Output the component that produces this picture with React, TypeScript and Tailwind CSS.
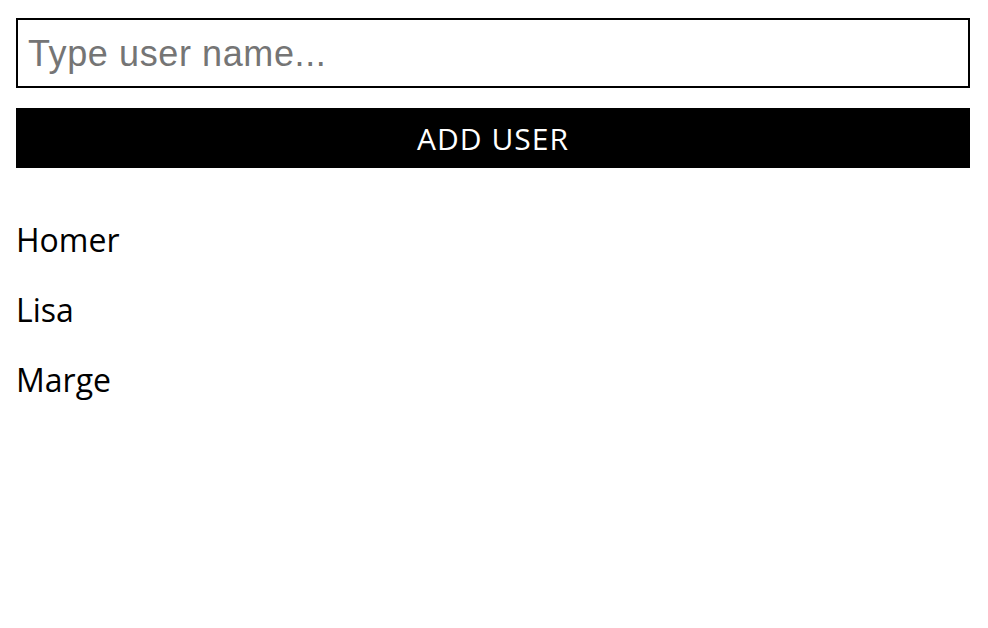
import { useState } from 'react'

export default function App() {
  const [name, setName] = useState('')
  const [users, setUsers] = useState<string[]>(['Homer', 'Lisa', 'Marge'])

  function handleAdd() {
    if (!name.trim()) return
    setUsers(prev => [...prev, name.trim()])
    setName('')
  }

  return (
    <div className="min-h-screen bg-white px-4 pt-[18px] font-['Open_Sans',sans-serif] text-black">
      <input
        type="text"
        value={name}
        onChange={e => setName(e.target.value)}
        onKeyDown={e => e.key === 'Enter' && handleAdd()}
        placeholder="Type user name..."
        className="block h-[70px] w-[954px] border-2 border-black px-[10px] pt-[2px] font-['Liberation_Sans',Arial,sans-serif] text-[36px] tracking-[0.6px] placeholder:text-[#757575] focus:outline-none"
      />
      <button
        onClick={handleAdd}
        className="mt-5 block h-[60px] w-[954px] bg-black text-[30px] tracking-[1px] text-white"
      >
        ADD USER
      </button>
      <ul className="mt-[50px] flex flex-col gap-[26px]">
        {users.map(u => (
          <li key={u} className="text-[32px] leading-[44px]">
            {u}
          </li>
        ))}
      </ul>
    </div>
  )
}
